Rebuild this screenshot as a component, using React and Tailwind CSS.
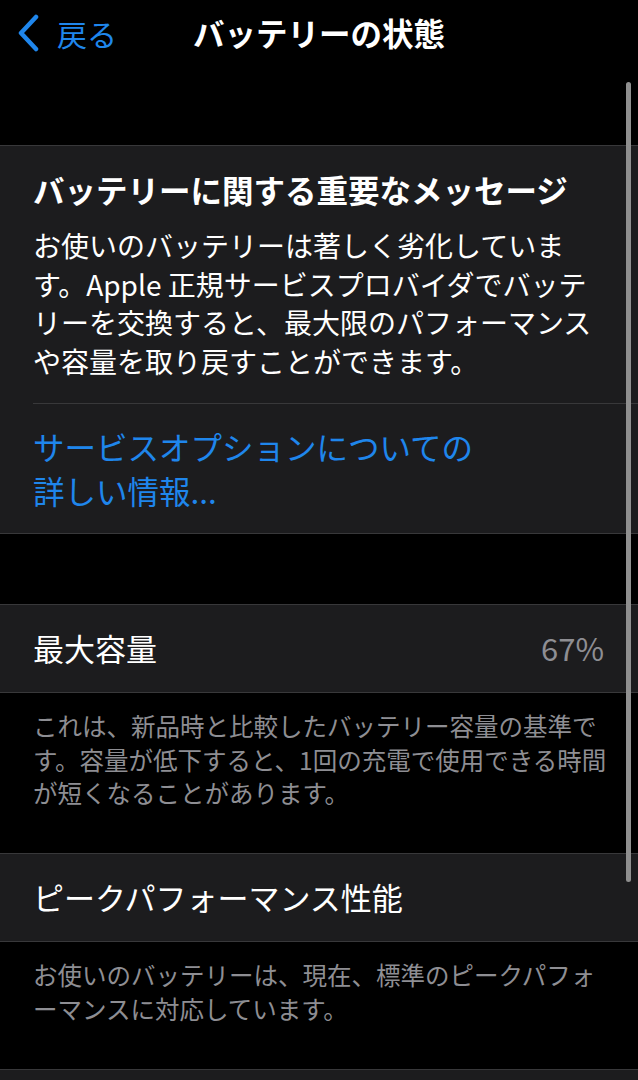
import React from 'react';

const font = { fontFamily: '"Noto Sans CJK JP", "Noto Sans", sans-serif' };

const BackChevron = () => (
  <svg width="24" height="38" viewBox="0 0 24 38" fill="none">
    <path d="M20 3 L5 19 L20 35" stroke="#1f86ec" strokeWidth="4.5" strokeLinecap="round" strokeLinejoin="round" />
  </svg>
);

const Row = ({ label, value }) => (
  <div className="flex h-[89px] items-center justify-between border-y border-[#38383a] bg-[#1c1c1e] pl-[33px] pr-[34px]">
    <span className="text-[31px] text-white">{label}</span>
    {value && <span className="text-[31px] text-[#8e8e93]">{value}</span>}
  </div>
);

const Lines = ({ lines }) =>
  lines.map((l, i) => (
    <span key={i} className="block whitespace-nowrap">
      {l}
    </span>
  ));

const Footer = ({ lines, className = '' }) => (
  <div className={`px-[33px] pt-[16px] text-[24.5px] leading-[33.5px] text-[#8e8e93] ${className}`}>
    <Lines lines={lines} />
  </div>
);

export default function App() {
  return (
    <div className="relative h-[1080px] w-full overflow-hidden bg-black" style={font}>
      <div className="relative flex h-[66px] items-center">
        <div className="flex items-center pl-[16px]">
          <BackChevron />
          <span className="ml-[17px] text-[30px] text-[#1f86ec]">戻る</span>
        </div>
        <div className="absolute inset-x-0 top-0 flex h-[66px] items-center justify-center">
          <span className="text-[31.5px] font-bold text-white">バッテリーの状態</span>
        </div>
      </div>

      <div className="mt-[79px] border-y border-[#38383a] bg-[#1c1c1e]">
        <div className="px-[33px] pt-[21px] pb-[23px]">
          <h2 className="whitespace-nowrap text-[31.5px] font-bold leading-[44px] text-white">
            バッテリーに関する重要なメッセージ
          </h2>
          <div className="mt-[15px] text-[28px] leading-[38.5px] text-white">
            <Lines
              lines={[
                'お使いのバッテリーは著しく劣化していま',
                'す。Apple 正規サービスプロバイダでバッテ',
                'リーを交換すると、最大限のパフォーマンス',
                'や容量を取り戻すことができます。',
              ]}
            />
          </div>
        </div>
        <div className="ml-[33px] h-px bg-[#38383a]" />
        <div className="px-[33px] pt-[21px] pb-[21px]">
          <p className="text-[31.5px] leading-[43.5px] text-[#1f86ec]">
            サービスオプションについての
            <br />
            詳しい情報...
          </p>
        </div>
      </div>

      <div className="h-[70px]" />

      <Row label="最大容量" value="67%" />
      <Footer
        className="h-[160px]"
        lines={[
          'これは、新品時と比較したバッテリー容量の基準で',
          'す。容量が低下すると、1回の充電で使用できる時間',
          'が短くなることがあります。',
        ]}
      />

      <Row label="ピークパフォーマンス性能" />
      <Footer
        className="h-[127px]"
        lines={[
          'お使いのバッテリーは、現在、標準のピークパフォ',
          'ーマンスに対応しています。',
        ]}
      />

      <div className="h-[40px] border-t border-[#38383a] bg-[#1c1c1e]" />

      <div className="absolute right-[7px] top-[82px] h-[800px] w-[5px] rounded-full bg-[#8f8f8f]" />
    </div>
  );
}
